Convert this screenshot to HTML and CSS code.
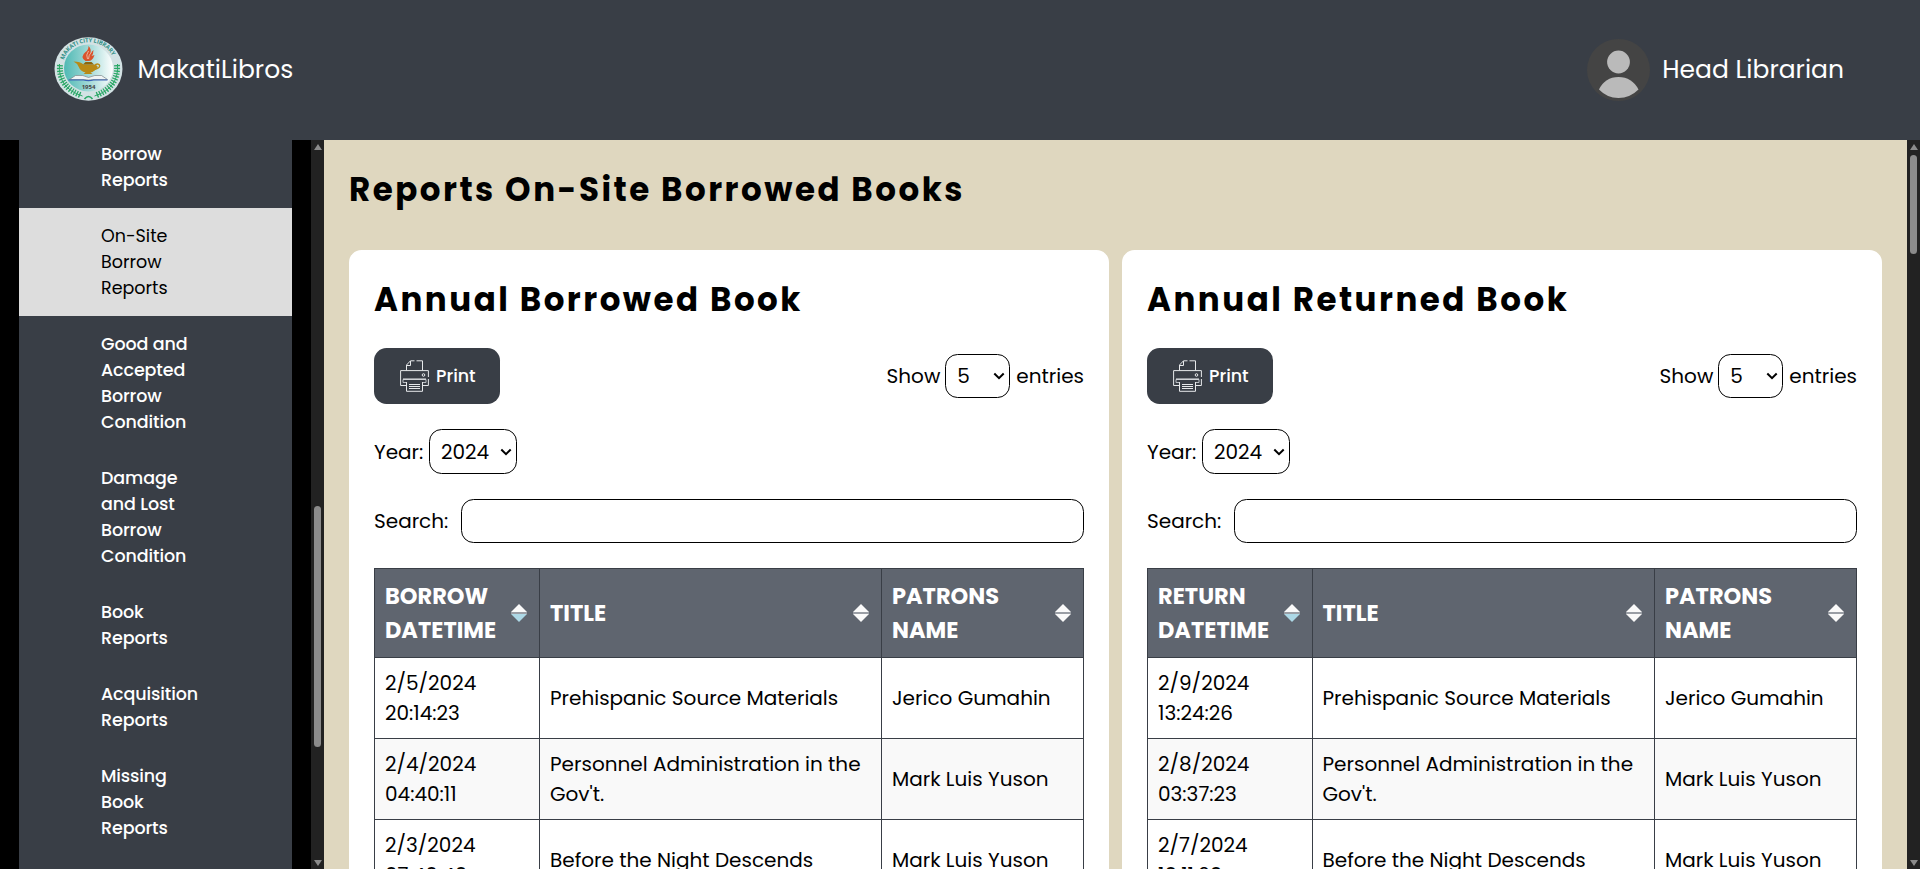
FILE: index.html
```html
<!DOCTYPE html>
<html lang="en">
<head>
<meta charset="utf-8">
<title>MakatiLibros</title>
<link rel="stylesheet" href="styles.css">
</head>
<body>
<svg class="defs" width="0" height="0">
  <symbol id="printer" viewBox="0 0 29 32">
    <g fill="none" stroke="#e6e8ea" stroke-width="1">
      <path d="M6.500 10.500V5L10.500 .8h4M16.500 .8h6V10.500M6.500 5.500H10.500V1"/>
      <path d="M6 25.500H.6V10.600H28.400V17M28.400 19v6.500H23"/>
      <path d="M6 22.500H3V19.500H26v3H23" stroke="#b9bdc2"/>
      <path d="M6.500 22V31.300H22.500V22M3 19h23M9 24.500h11M9 26.500h11M9 28.500h11"/>
      <circle cx="23.500" cy="15" r="1.300"/>
    </g>
  </symbol>
  <symbol id="chevron" viewBox="0 0 12 8"><path d="M1.300 1.500 6 6.200l4.700-4.700" fill="none" stroke="#000" stroke-width="2"/></symbol>
  <symbol id="sort" viewBox="0 0 16 18"><path d="M0 8 8 0l8 8z" fill="#fafafa"/><path d="M0 10 8 18l8-8z"/><path d="M0 8h16v2H0z" fill="#9a9ea5"/></symbol>
</svg>

<header class="topbar">
  <div class="brand">
    <svg class="logo" viewBox="0 0 68 64">
      <defs>
        <linearGradient id="sea" x1="0" x2="1"><stop offset="0" stop-color="#4fb9b4"/><stop offset=".55" stop-color="#a9dcda"/><stop offset="1" stop-color="#fff"/></linearGradient>
        <path id="arc" d="M9.500 23A26 24.500 0 0 1 60 25"/>
      </defs>
      <ellipse cx="34" cy="32" rx="34" ry="31.700" fill="#d3e2e4"/>
      <ellipse cx="34" cy="31" rx="24.500" ry="23.500" fill="url(#sea)"/>
      <text class="seal-name"><textPath href="#arc">MAKATI CITY LIBRARY</textPath></text>
      <g fill="none" stroke="#2aa866">
        <path d="M5 27Q3 51 28 59M63 27Q65 51 40 59" stroke-width="1"/>
        <path d="M5.500 28Q4 50 27 58.500M62.500 28Q64 50 41 58.500" stroke-width="6" stroke-dasharray="1.300 1.400"/>
        <path d="M30 62q4-5 8 0" stroke-width="1.600"/>
      </g>
      <path d="M31 24q-6-4 0-9 3-2 3-6 3 3 2 7l3-3q0 4-2 6l3-1q-2 6-6 6z" fill="#d9532c"/>
      <path d="M34 14q-3 4-1 8M37 15q-3 3-3 7" stroke="#f3c7b3" stroke-width=".8" fill="none"/>
      <path d="M19 24.500q7 0 10 3h10q3 0 3 1 3 1-2 5-2 2-4 2l2 1.500H29l2-1.500q-5-1-7-6-1-3-5-5z" fill="#b88a16"/>
      <path d="M31 25h6l2.500 2.500H28.500z" fill="#8d650c"/>
      <path d="M40 29q2-3 4.500-1.500 2 2.500-2 4l-4 1.500" fill="none" stroke="#b88a16" stroke-width="1.400"/>
      <path d="M15 42.500 21 38.500q8-1 13 2 6-3 13-2l6 4H38q-4 1-8 0z" fill="#f0f4f5" stroke="#7d8588" stroke-width=".7"/>
      <path d="M14 43h15q5 1.300 10 0h14" fill="none" stroke="#3a62b5" stroke-width="1.200"/>
      <text class="seal-year" x="34" y="51.500">1954</text>
    </svg>
    <span>MakatiLibros</span>
  </div>
  <div class="user">
    <svg class="avatar" viewBox="0 0 63 62">
      <ellipse cx="31.500" cy="31" rx="31.500" ry="31" fill="#444"/>
      <circle cx="31.500" cy="23" r="11.400" fill="#bababa"/>
      <path d="M12 50.500Q18 38 31.500 38T51.500 50.500Q43 59 31.500 59T12 50.500z" fill="#bababa"/>
    </svg>
    <span>Head Librarian</span>
  </div>
</header>

<div class="shell">
  <aside class="sidebar">
    <nav class="menu">
      <a class="item clipped">Borrow<br>Reports</a>
      <a class="item active">On-Site<br>Borrow<br>Reports</a>
      <a class="item">Good and<br>Accepted<br>Borrow<br>Condition</a>
      <a class="item">Damage<br>and Lost<br>Borrow<br>Condition</a>
      <a class="item">Book<br>Reports</a>
      <a class="item">Acquisition<br>Reports</a>
      <a class="item">Missing<br>Book<br>Reports</a>
    </nav>
  </aside>
  <div class="scrollbar side-scroll"><i class="arrow up"></i><i class="thumb"></i><i class="arrow dn"></i></div>

  <main class="content">
    <h1>Reports On-Site Borrowed Books</h1>
    <div class="cards">
      <section class="card">
        <h2>Annual Borrowed Book</h2>
        <div class="row tools">
          <button class="print"><svg><use href="#printer"/></svg><span>Print</span></button>
          <div class="row"><span>Show</span><span class="select count"><span>5</span><svg><use href="#chevron"/></svg></span><span class="entries">entries</span></div>
        </div>
        <div class="row year"><span class="year-lbl">Year:</span><span class="select"><span>2024</span><svg><use href="#chevron"/></svg></span></div>
        <div class="row search"><label>Search:</label><input type="text"></div>
        <table>
          <colgroup><col class="c1"><col class="c2"><col class="c3"></colgroup>
          <thead><tr>
            <th><div class="head sorted"><span>BORROW<br>DATETIME</span><svg><use href="#sort"/></svg></div></th>
            <th><div class="head"><span>TITLE</span><svg><use href="#sort"/></svg></div></th>
            <th><div class="head"><span>PATRONS<br>NAME</span><svg><use href="#sort"/></svg></div></th>
          </tr></thead>
          <tbody>
            <tr><td>2/5/2024<br>20:14:23</td><td>Prehispanic Source Materials</td><td>Jerico Gumahin</td></tr>
            <tr><td>2/4/2024<br>04:40:11</td><td>Personnel Administration in the Gov't.</td><td>Mark Luis Yuson</td></tr>
            <tr><td>2/3/2024<br>07:40:40</td><td>Before the Night Descends</td><td>Mark Luis Yuson</td></tr>
          </tbody>
        </table>
      </section>
      <section class="card">
        <h2>Annual Returned Book</h2>
        <div class="row tools">
          <button class="print"><svg><use href="#printer"/></svg><span>Print</span></button>
          <div class="row"><span>Show</span><span class="select count"><span>5</span><svg><use href="#chevron"/></svg></span><span class="entries">entries</span></div>
        </div>
        <div class="row year"><span class="year-lbl">Year:</span><span class="select"><span>2024</span><svg><use href="#chevron"/></svg></span></div>
        <div class="row search"><label>Search:</label><input type="text"></div>
        <table>
          <colgroup><col class="c1 narrow"><col class="c2"><col class="c3"></colgroup>
          <thead><tr>
            <th><div class="head sorted"><span>RETURN<br>DATETIME</span><svg><use href="#sort"/></svg></div></th>
            <th><div class="head"><span>TITLE</span><svg><use href="#sort"/></svg></div></th>
            <th><div class="head"><span>PATRONS<br>NAME</span><svg><use href="#sort"/></svg></div></th>
          </tr></thead>
          <tbody>
            <tr><td>2/9/2024<br>13:24:26</td><td>Prehispanic Source Materials</td><td>Jerico Gumahin</td></tr>
            <tr><td>2/8/2024<br>03:37:23</td><td>Personnel Administration in the Gov't.</td><td>Mark Luis Yuson</td></tr>
            <tr><td>2/7/2024<br>10:11:20</td><td>Before the Night Descends</td><td>Mark Luis Yuson</td></tr>
          </tbody>
        </table>
      </section>
    </div>
  </main>
  <div class="scrollbar main-scroll"><i class="arrow up"></i><i class="thumb"></i><i class="arrow dn"></i></div>
</div>
</body>
</html>
```
FILE: styles.css
```css
* { box-sizing: border-box; }
body {
  margin: 0; height: 869px; overflow: hidden;
  display: flex; flex-direction: column;
  font: 400 20px/30px Poppins, sans-serif;
  color: #000; background: #000;
}
.defs { display: none; }

/* top bar */
.topbar {
  height: 140px; flex: none; background: #393e46; color: #fff;
  display: flex; align-items: center; justify-content: space-between;
  padding: 0 76px 0 54px; font-size: 25px;
}
.brand, .user { display: flex; align-items: center; }
.brand span, .user span { padding-bottom: 1px; }
.logo { width: 69px; height: 64px; margin-top: -3px; margin-right: 14.5px; }
.avatar { width: 63px; height: 62px; margin-right: 12px; }
.seal-name { font: 700 5.8px "Open Sans", sans-serif; fill: #2f8f86; letter-spacing: -.1px; }
.seal-year { font: 700 6px "Open Sans", sans-serif; fill: #444; text-anchor: middle; }

.shell { height: 729px; display: flex; }

/* sidebar */
.sidebar { width: 311px; flex: none; padding: 0 19px; overflow: hidden; }
.menu { height: 100%; background: #393e46; display: flex; flex-direction: column; }
.item {
  padding: 15px 0 15px 82px; color: #fff;
  font-size: 17.5px; font-weight: 500; line-height: 26px; letter-spacing: -.1px;
}
.item.clipped { padding-top: 1px; }
.item.active { background: #ddd; color: #000; font-weight: 400; letter-spacing: 0; }

/* scrollbars */
.scrollbar {
  width: 13px; flex: none; background: #222;
  display: flex; flex-direction: column; align-items: center;
}
.arrow { border: 4px solid transparent; border-top: 0; border-bottom: 6px solid #8b8b8b; width: 8px; margin-top: 4px; }
.arrow.dn { border-bottom: 0; border-top: 6px solid #8b8b8b; margin: auto 0 3px; }
.thumb { width: 7px; border-radius: 4px; background: #8b8b8b; }
.side-scroll .thumb { height: 241px; margin-top: 356px; }
.main-scroll .thumb { height: 99px; margin-top: 5px; }

/* content */
.content { flex: 1; min-width: 0; background: #dfd7bf; padding: 25px 25px 0; overflow: hidden; }
h1, h2 { margin: 0; font-size: 32.5px; font-weight: 700; line-height: 49px; letter-spacing: 2.5px; white-space: nowrap; }
h1 { margin-bottom: 36px; }
h2 { margin-bottom: 24px; }
.cards { display: grid; grid-template-columns: 760px 760px; gap: 13px; }
.card { background: #fff; border-radius: 12.5px; padding: 25px 25px 40px; }
.row { display: flex; align-items: center; }
.tools { justify-content: space-between; height: 56px; }
.print {
  width: 126px; height: 56px; border: 0; border-radius: 12.5px; padding: 0 0 0 26px;
  background: #393e46; color: #fff; font: 500 17.5px/26px Poppins, sans-serif;
  display: flex; align-items: center; gap: 7px;
}
.print svg { width: 29px; height: 32px; }
.entries { padding-left: 6px; }
.select {
  width: 88px; height: 45px; border: 1px solid #000; border-radius: 12.5px;
  display: flex; align-items: center; justify-content: space-between; padding: 0 4px 0 11px;
}
.select svg { width: 12px; height: 8px; }
.count { width: 65px; height: 44px; margin-left: 5px; }
.year { margin-top: 25px; height: 45px; }
.year-lbl { width: 55px; }
.search { margin-top: 25px; height: 44px; }
.search label { width: 87px; }
.search input { flex: 1; height: 44px; border: 1px solid #000; border-radius: 12.5px; background: #fff; padding: 0 12px; }

/* tables */
table { width: 710px; margin-top: 25px; border-collapse: collapse; table-layout: fixed; }
.c1 { width: 165px; }
.c1.narrow { width: 164.5px; }
.c3 { width: 202px; }
th, td { border: 1px solid #393e46; text-align: left; vertical-align: middle; }
th { height: 89px; padding: 0 10px; background: #5f656f; color: #fff; font-size: 22.5px; line-height: 34px; }
td { height: 81px; padding: 0 10px; }
tbody tr:nth-child(even) { background: #f9f9f9; }
.head { display: flex; align-items: center; justify-content: space-between; padding-right: 2px; }
.head svg { width: 16px; height: 18px; flex: none; fill: #fafafa; }
.sorted svg { fill: #add8e6; }
```
